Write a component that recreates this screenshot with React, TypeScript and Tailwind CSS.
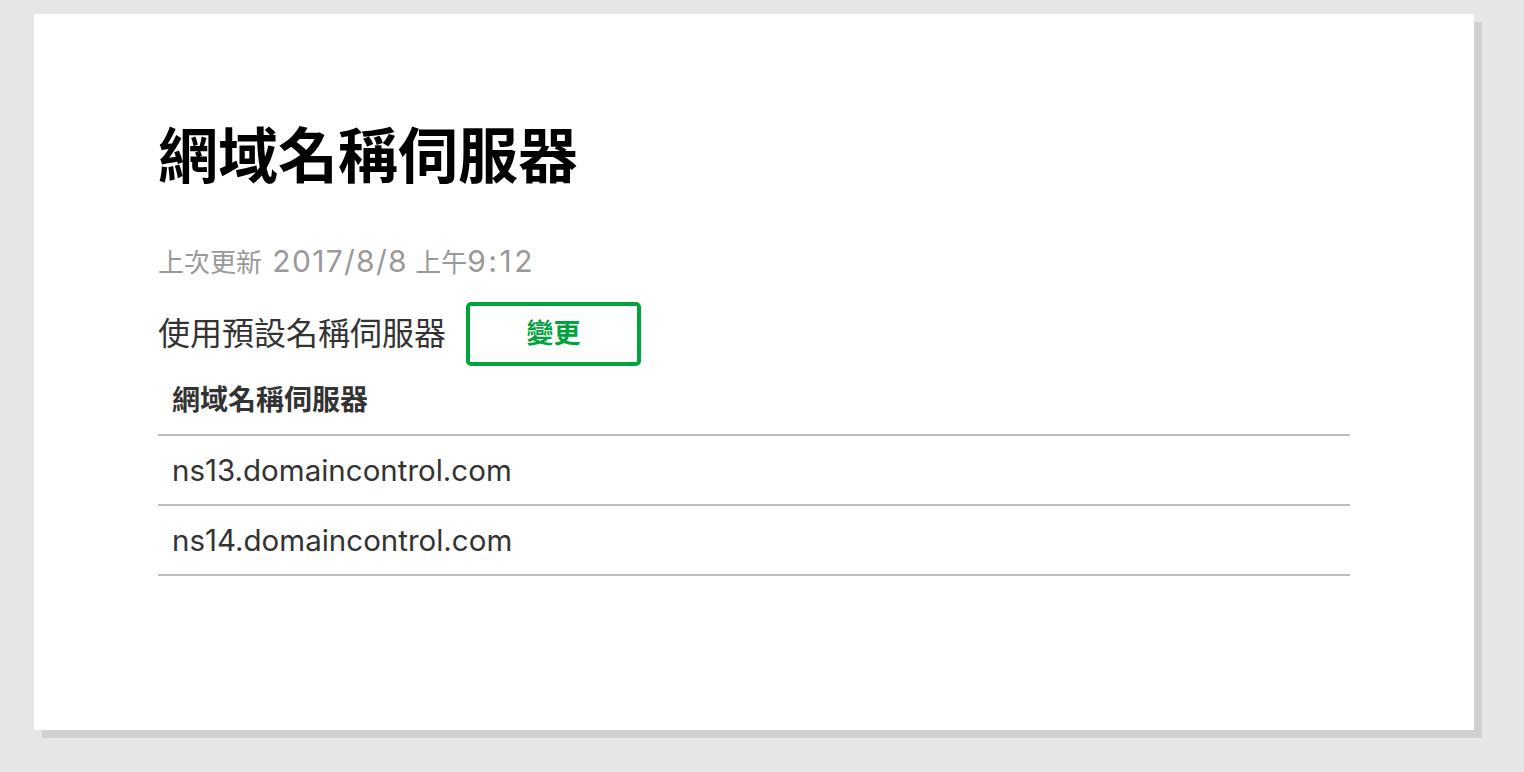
import React from "react";

export default function App() {
  const font = { fontFamily: 'Inter, "Noto Sans CJK TC", "Noto Sans", sans-serif' };
  return (
    <div className="min-h-[772px] w-full bg-[#e6e6e6] pl-[34px] pt-[14px]" style={font}>
      <div className="h-[716px] w-[1440px] bg-white px-[124px] pt-[107px] shadow-[8px_8px_0_0_#d0d0d0]">
        <h1 className="text-[60px] font-bold leading-[70px] text-black">網域名稱伺服器</h1>
        <div className="mt-[52px] h-[36px] text-[26px] leading-[36px] text-[#999999]">
          上次更新 <span className="ml-[3px] text-[30px] tracking-[1.3px]">2017/8/8</span> 上午<span className="text-[30px] tracking-[2.5px]">9:12</span>
        </div>
        <div className="mt-[23px] flex h-[64px] items-center">
          <span className="text-[32px] leading-[40px] text-[#333333]">使用預設名稱伺服器</span>
          <button className="ml-[20px] flex h-[64px] w-[175px] items-center justify-center rounded-[5px] border-[4px] border-[#00a33c] bg-white text-[27px] font-bold text-[#00a33c]">
            變更
          </button>
        </div>
        <div className="flex h-[70px] items-center border-b-2 border-[#bdbdbd] pl-[14px] text-[28px] font-bold text-[#333333]">
          網域名稱伺服器
        </div>
        <div className="flex h-[70px] items-center border-b-2 border-[#bdbdbd] pl-[14px] text-[29.5px] text-[#333333]">
          ns13.domaincontrol.com
        </div>
        <div className="flex h-[70px] items-center border-b-2 border-[#bdbdbd] pl-[14px] text-[29.5px] text-[#333333]">
          ns14.domaincontrol.com
        </div>
      </div>
    </div>
  );
}
